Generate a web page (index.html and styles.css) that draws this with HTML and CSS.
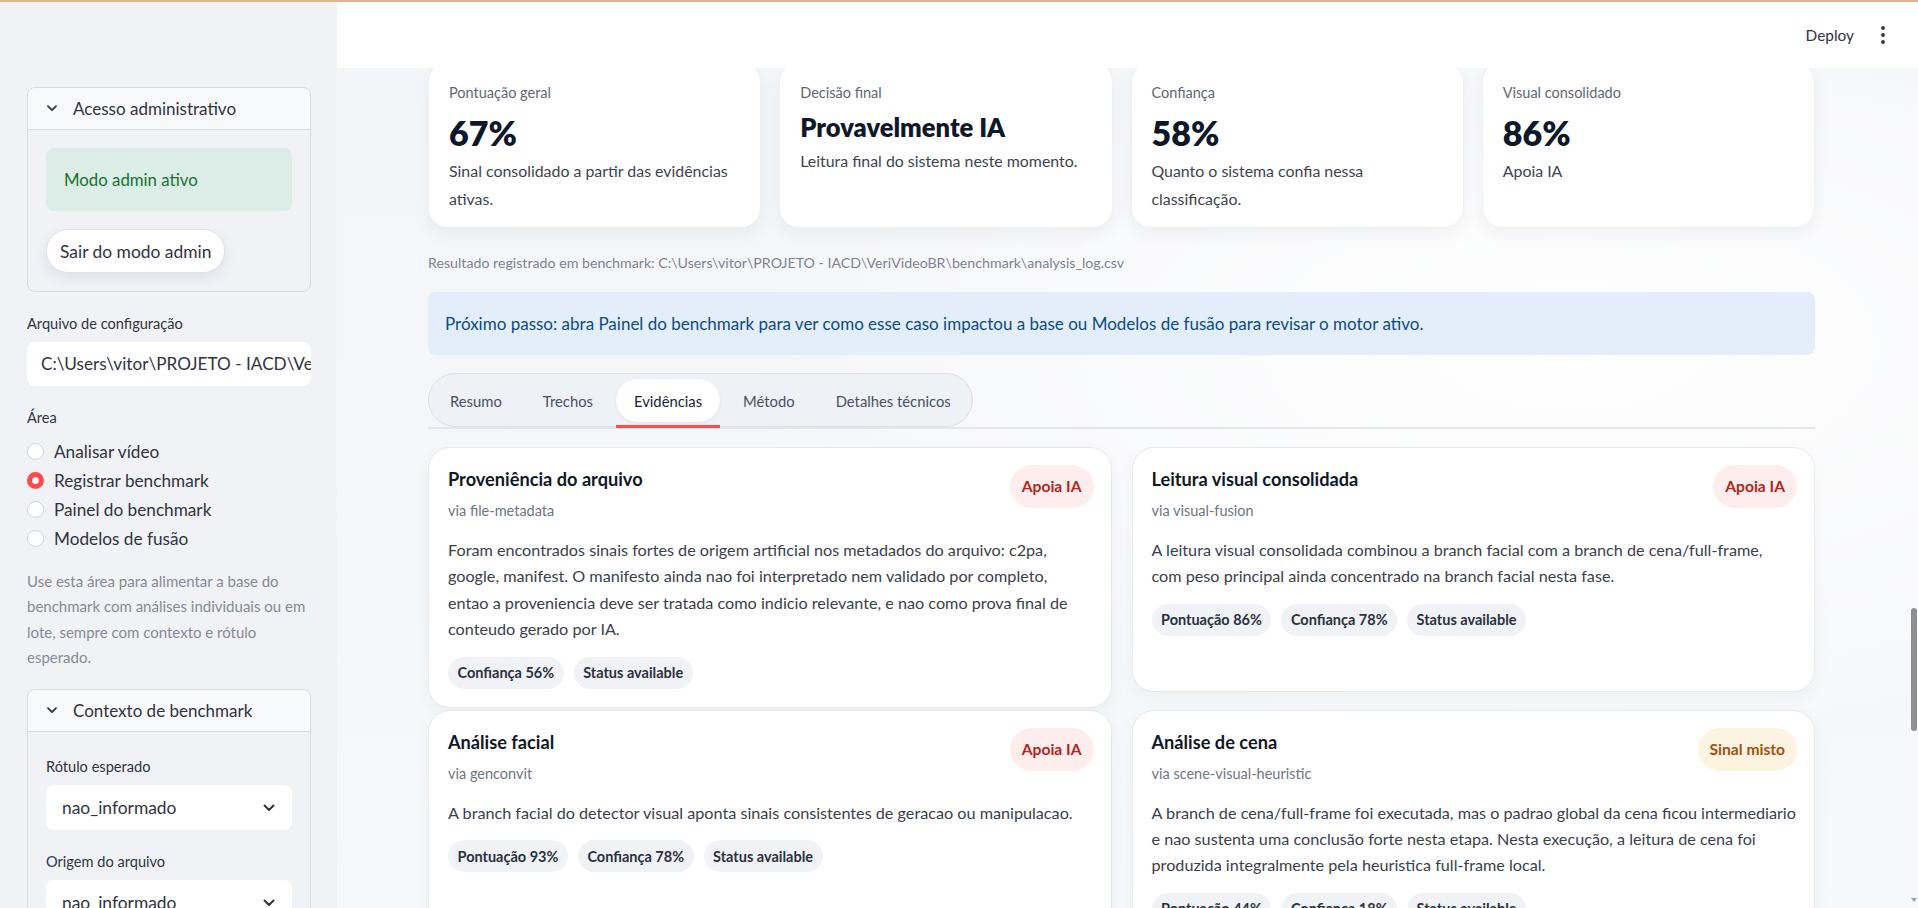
FILE: index.html
```html
<!DOCTYPE html>
<html lang="pt-BR">
<head>
<meta charset="UTF-8" />
<meta name="viewport" content="width=device-width, initial-scale=1" />
<title>VeriVideoBR - Registrar benchmark</title>
<link rel="stylesheet" href="styles.css">
</head>
<body>
<div class="app">

  <!-- barra lateral -->
  <aside class="sidebar">
    <div class="expander">
      <div class="expander-head">
        <svg class="chev" width="10" height="7" viewBox="0 0 10 7"><path d="M1 1.2l4 4 4-4" fill="none" stroke="#31333f" stroke-width="1.8" stroke-linecap="round" stroke-linejoin="round"/></svg>
        <span>Acesso administrativo</span>
      </div>
      <div class="expander-body">
        <div class="success">Modo admin ativo</div>
        <button class="btn">Sair do modo admin</button>
      </div>
    </div>

    <div class="label">Arquivo de configuração</div>
    <div class="text-input">C:\Users\vitor\PROJETO - IACD\VeriVideoBR\config\settings.yaml</div>

    <div class="label">Área</div>
    <div class="radios">
      <div class="radio"><span class="dot"></span>Analisar vídeo</div>
      <div class="radio checked"><span class="dot"></span>Registrar benchmark</div>
      <div class="radio"><span class="dot"></span>Painel do benchmark</div>
      <div class="radio"><span class="dot"></span>Modelos de fusão</div>
    </div>

    <p class="help">Use esta área para alimentar a base do benchmark com análises individuais ou em lote, sempre com contexto e rótulo esperado.</p>

    <div class="expander second">
      <div class="expander-head">
        <svg class="chev" width="10" height="7" viewBox="0 0 10 7"><path d="M1 1.2l4 4 4-4" fill="none" stroke="#31333f" stroke-width="1.8" stroke-linecap="round" stroke-linejoin="round"/></svg>
        <span>Contexto de benchmark</span>
      </div>
      <div class="expander-body">
        <div class="label first">Rótulo esperado</div>
        <div class="select">
          <span>nao_informado</span>
          <svg width="12" height="8" viewBox="0 0 12 8"><path d="M1.5 1.5l4.5 4.5 4.5-4.5" fill="none" stroke="#31333f" stroke-width="2" stroke-linecap="round" stroke-linejoin="round"/></svg>
        </div>
        <div class="label">Origem do arquivo</div>
        <div class="select">
          <span>nao_informado</span>
          <svg width="12" height="8" viewBox="0 0 12 8"><path d="M1.5 1.5l4.5 4.5 4.5-4.5" fill="none" stroke="#31333f" stroke-width="2" stroke-linecap="round" stroke-linejoin="round"/></svg>
        </div>
      </div>
    </div>
  </aside>

  <!-- area principal -->
  <main class="main">
    <header class="topbar">
      <span class="deploy">Deploy</span>
      <svg width="4" height="18" viewBox="0 0 4 18"><circle cx="2" cy="2" r="1.9" fill="#31333f"/><circle cx="2" cy="9" r="1.9" fill="#31333f"/><circle cx="2" cy="16" r="1.9" fill="#31333f"/></svg>
    </header>

    <div class="content">
      <section class="metrics">
        <div class="metric">
          <div class="metric-label">Pontuação geral</div>
          <div class="metric-value">67%</div>
          <div class="metric-desc">Sinal consolidado a partir das evidências ativas.</div>
        </div>
        <div class="metric">
          <div class="metric-label">Decisão final</div>
          <div class="metric-value text">Provavelmente IA</div>
          <div class="metric-desc">Leitura final do sistema neste momento.</div>
        </div>
        <div class="metric">
          <div class="metric-label">Confiança</div>
          <div class="metric-value">58%</div>
          <div class="metric-desc">Quanto o sistema confia nessa classificação.</div>
        </div>
        <div class="metric">
          <div class="metric-label">Visual consolidado</div>
          <div class="metric-value">86%</div>
          <div class="metric-desc">Apoia IA</div>
        </div>
      </section>

      <p class="saved">Resultado registrado em benchmark: C:\Users\vitor\PROJETO - IACD\VeriVideoBR\benchmark\analysis_log.csv</p>

      <div class="info">Próximo passo: abra Painel do benchmark para ver como esse caso impactou a base ou Modelos de fusão para revisar o motor ativo.</div>

      <nav class="tabs-row">
        <div class="tabs">
          <span class="tab">Resumo</span>
          <span class="tab">Trechos</span>
          <span class="tab active">Evidências</span>
          <span class="tab">Método</span>
          <span class="tab">Detalhes técnicos</span>
        </div>
      </nav>

      <section class="evidence">
        <article class="card">
          <div class="card-head">
            <div>
              <h3>Proveniência do arquivo</h3>
              <div class="via">via file-metadata</div>
            </div>
            <span class="badge ai">Apoia IA</span>
          </div>
          <p>Foram encontrados sinais fortes de origem artificial nos metadados do arquivo: c2pa, google, manifest. O manifesto ainda nao foi interpretado nem validado por completo,<br>entao a proveniencia deve ser tratada como indicio relevante, e nao como prova final de conteudo gerado por IA.</p>
          <div class="chips">
            <span class="chip">Confiança 56%</span>
            <span class="chip">Status available</span>
          </div>
        </article>

        <article class="card">
          <div class="card-head">
            <div>
              <h3>Leitura visual consolidada</h3>
              <div class="via">via visual-fusion</div>
            </div>
            <span class="badge ai">Apoia IA</span>
          </div>
          <p>A leitura visual consolidada combinou a branch facial com a branch de cena/full-frame,<br>com peso principal ainda concentrado na branch facial nesta fase.</p>
          <div class="chips">
            <span class="chip">Pontuação 86%</span>
            <span class="chip">Confiança 78%</span>
            <span class="chip">Status available</span>
          </div>
        </article>

        <article class="card">
          <div class="card-head">
            <div>
              <h3>Análise facial</h3>
              <div class="via">via genconvit</div>
            </div>
            <span class="badge ai">Apoia IA</span>
          </div>
          <p>A branch facial do detector visual aponta sinais consistentes de geracao ou manipulacao.</p>
          <div class="chips">
            <span class="chip">Pontuação 93%</span>
            <span class="chip">Confiança 78%</span>
            <span class="chip">Status available</span>
          </div>
        </article>

        <article class="card">
          <div class="card-head">
            <div>
              <h3>Análise de cena</h3>
              <div class="via">via scene-visual-heuristic</div>
            </div>
            <span class="badge mixed">Sinal misto</span>
          </div>
          <p>A branch de cena/full-frame foi executada, mas o padrao global da cena ficou intermediario e nao sustenta uma conclusão forte nesta etapa. Nesta execução, a leitura de cena foi produzida integralmente pela heuristica full-frame local.</p>
          <div class="chips">
            <span class="chip">Pontuação 44%</span>
            <span class="chip">Confiança 18%</span>
            <span class="chip">Status available</span>
          </div>
        </article>
      </section>
    </div>

    <div class="scroll-thumb"></div>
    <div class="scroll-arrow"></div>
  </main>

</div>
</body>
</html>
```

FILE: styles.css
```css
* {
  box-sizing: border-box;
}

html, body {
  margin: 0;
  height: 100%;
}

body {
  font-family: Lato, "Liberation Sans", sans-serif;
  color: #31333f;
  overflow: hidden;
}

.app {
  display: flex;
  height: 908px;
  border-top: 2px solid #dcb68e;
}

/* --- Barra lateral --- */
.sidebar {
  width: 337px;
  flex: none;
  background: #f0f2f6;
  padding: 85px 26px 0 27px;
  overflow: hidden;
}

.expander {
  border: 1px solid #d6d9df;
  border-radius: 8px;
  overflow: hidden;
}
.expander.second {
  margin-top: 19px;
}
.expander-head {
  display: flex;
  align-items: center;
  gap: 16px;
  height: 42px;
  padding-left: 19px;
  background: #f8f9fb;
  border-bottom: 1px solid #d6d9df;
  font-size: 17px;
}
.expander-body {
  padding: 18px;
}

.success {
  background: #dbede6;
  color: #177233;
  border-radius: 8px;
  padding: 19px 18px;
  font-size: 16.8px;
  line-height: 25px;
}

.btn {
  margin-top: 18px;
  height: 44px;
  padding: 0 13px;
  border: 1px solid #e0e2e7;
  border-radius: 22px;
  background: #fff;
  box-shadow: 0 5px 14px rgba(20, 30, 50, 0.08);
  font-family: inherit;
  font-size: 17.4px;
  color: #31333f;
}

.label {
  margin-top: 22px;
  font-size: 14.6px;
  line-height: 20px;
}
.label.first {
  margin-top: 7px;
}

.text-input {
  margin-top: 8px;
  height: 44px;
  background: #fff;
  border-radius: 8px;
  padding: 0 9px 0 14px;
  font-size: 17.2px;
  line-height: 44px;
  white-space: nowrap;
  overflow: hidden;
}

.radios {
  margin-top: 11px;
  display: flex;
  flex-direction: column;
  gap: 5px;
}
.radio {
  display: flex;
  align-items: center;
  gap: 10px;
  height: 24px;
  font-size: 17.2px;
}
.radio .dot {
  width: 17px;
  height: 17px;
  border-radius: 50%;
  background: #fff;
  border: 1px solid #cfd2d8;
}
.radio.checked .dot {
  background: #ff4b4b;
  border: 5.5px solid #ff4b4b;
  box-shadow: inset 0 0 0 20px #fff;
  background-clip: padding-box;
}

.help {
  margin: 19px 0 0;
  font-size: 15px;
  line-height: 25.3px;
  color: #868a95;
}

.select {
  margin-top: 8px;
  height: 45px;
  background: #fff;
  border-radius: 8px;
  padding: 0 17px 0 16px;
  display: flex;
  align-items: center;
  justify-content: space-between;
  font-size: 17.4px;
}

/* --- Area principal --- */
.main {
  flex: 1;
  position: relative;
  overflow: hidden;
  background:
    radial-gradient(ellipse 55% 45% at 78% 38%, #ffffff 0%, rgba(255, 255, 255, 0) 100%),
    linear-gradient(180deg, #f4f5f8 0%, #f7f8fa 100%);
}

.topbar {
  position: absolute;
  top: 0;
  left: 0;
  right: 0;
  height: 66px;
  background: #fff;
  z-index: 2;
  display: flex;
  align-items: center;
  justify-content: flex-end;
  gap: 27px;
  padding-right: 33px;
}
.deploy {
  font-size: 15.4px;
}

.content {
  width: 1387px;
  margin-left: 91px;
  padding-top: 60px;
}

.metrics {
  display: grid;
  grid-template-columns: repeat(4, 1fr);
  gap: 18px;
}
.metric {
  background: #fff;
  border: 1px solid #eef0f3;
  border-radius: 20px;
  padding: 20px 20px 14px;
  box-shadow: 0 6px 18px rgba(15, 23, 42, 0.05);
}
.metric-label {
  font-size: 14.5px;
  line-height: 20px;
  color: #5f6673;
}
.metric-value {
  margin-top: 9px;
  font-size: 34px;
  line-height: 41px;
  font-weight: 800;
  color: #0f172a;
}
.metric-value.text {
  font-size: 25.5px;
  line-height: 31px;
}
.metric-desc {
  margin-top: 4px;
  font-size: 15.9px;
  line-height: 28px;
  color: #3d4351;
}

.saved {
  margin: 25px 0 0;
  font-size: 14.2px;
  line-height: 20px;
  color: #7d8390;
}

.info {
  margin-top: 19px;
  background: #e4eefa;
  color: #0b4a8b;
  border-radius: 8px;
  padding: 19px 17px;
  font-size: 17px;
  line-height: 25px;
}

.tabs-row {
  margin-top: 18px;
  border-bottom: 2px solid #e4e6ea;
}
.tabs {
  display: inline-flex;
  gap: 5px;
  height: 54px;
  padding: 5px 3px 4px;
  border: 1px solid #dde1e7;
  border-radius: 27px;
  background: #eef1f5;
  vertical-align: bottom;
}
.tab {
  position: relative;
  display: flex;
  align-items: center;
  padding: 0 18px;
  border-radius: 22px;
  font-size: 14.8px;
  color: #4a5060;
}
.tab.active {
  background: #fff;
  color: #1f2430;
  box-shadow: 0 1px 3px rgba(0, 0, 0, 0.06);
}
.tab.active::after {
  content: "";
  position: absolute;
  left: 0;
  right: 0;
  bottom: -6px;
  height: 3px;
  background: #ff4b4b;
}

.evidence {
  margin-top: 18px;
  display: grid;
  grid-template-columns: 1fr 1fr;
  gap: 2px 20px;
  align-items: start;
}
.card {
  min-height: 245px;
  background: #fff;
  border: 1px solid #e7e9ed;
  border-radius: 22px;
  padding: 17px 17px 18px 19px;
  box-shadow: 0 6px 18px rgba(15, 23, 42, 0.04);
}
.card-head {
  display: flex;
  justify-content: space-between;
  align-items: flex-start;
}
.card h3 {
  margin: 0;
  font-size: 18.2px;
  line-height: 28px;
  font-weight: 700;
  color: #111827;
}
.via {
  margin-top: 8px;
  font-size: 14.5px;
  line-height: 20px;
  color: #70757f;
}
.badge {
  flex: none;
  padding: 11px 12px;
  border-radius: 22px;
  font-size: 15.6px;
  line-height: 21px;
  font-weight: 700;
}
.badge.ai {
  background: #fdeeed;
  color: #b3261e;
}
.badge.mixed {
  background: #fdf3e1;
  color: #a4510f;
}
.card p {
  margin: 16px 0 0;
  font-size: 16.2px;
  line-height: 26.4px;
  color: #3b404c;
}
.chips {
  margin-top: 14px;
  display: flex;
  gap: 10px;
}
.chip {
  height: 32px;
  display: flex;
  align-items: center;
  padding: 0 9.5px;
  border-radius: 16px;
  background: #f0f2f6;
  font-size: 14.5px;
  font-weight: 700;
  color: #2b3040;
}

/* barra de rolagem da pagina */
.scroll-thumb {
  position: absolute;
  right: 1px;
  top: 606px;
  width: 6px;
  height: 123px;
  border-radius: 3px;
  background: #8f8f8f;
}
.scroll-arrow {
  position: absolute;
  right: 1px;
  bottom: 6px;
  width: 0;
  height: 0;
  border-left: 3px solid transparent;
  border-right: 3px solid transparent;
  border-top: 4px solid #a0a0a0;
}
```
